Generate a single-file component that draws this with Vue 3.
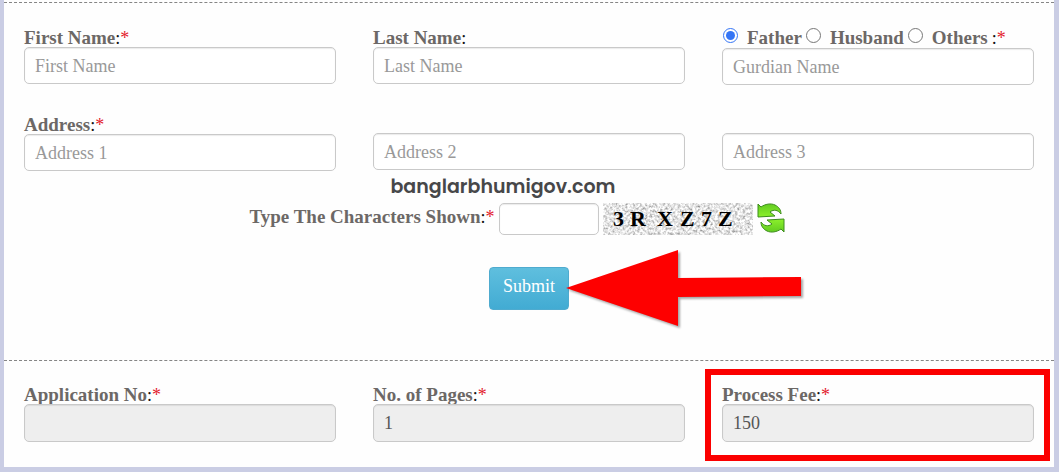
<script setup>
import { ref } from 'vue'

const guardian = ref('Father')
const guardians = ['Father', 'Husband', 'Others']
const captcha = [
  { ch: '3', x: 10 },
  { ch: 'R', x: 27 },
  { ch: 'X', x: 54 },
  { ch: 'Z', x: 77 },
  { ch: '7', x: 98 },
  { ch: 'Z', x: 115 },
]
</script>

<template>
  <form class="page" @submit.prevent>
    <section class="section applicant">
      <div class="row">
        <div class="field">
          <label class="caption" for="first"><b>First Name</b>:<i>*</i></label>
          <input id="first" class="box" type="text" placeholder="First Name" />
        </div>
        <div class="field">
          <label class="caption" for="last"><b>Last Name</b>:</label>
          <input id="last" class="box" type="text" placeholder="Last Name" />
        </div>
        <div class="field">
          <div class="caption choices">
            <label v-for="g in guardians" :key="g" class="choice">
              <input v-model="guardian" type="radio" name="guardian" :value="g" />
              <b>{{ g }}</b>
            </label>
            <span class="mark">:<i>*</i></span>
          </div>
          <input class="box" type="text" placeholder="Gurdian Name" aria-label="Gurdian Name" />
        </div>
      </div>

      <div class="row second">
        <div class="field">
          <label class="caption" for="addr1"><b>Address</b>:<i>*</i></label>
          <input id="addr1" class="box" type="text" placeholder="Address 1" />
        </div>
        <div class="field bare">
          <input class="box" type="text" placeholder="Address 2" aria-label="Address 2" />
        </div>
        <div class="field bare">
          <input class="box" type="text" placeholder="Address 3" aria-label="Address 3" />
        </div>
      </div>

      <div class="site">banglarbhumigov.com</div>

      <div class="captcha">
        <label class="caption" for="code"><b>Type The Characters Shown</b>:<i>*</i></label>
        <input id="code" class="box code" type="text" />
        <svg class="noise" width="150" height="32" viewBox="0 0 150 32" role="img" aria-label="Captcha">
          <filter id="grain" x="0" y="0" width="100%" height="100%">
            <feTurbulence type="fractalNoise" baseFrequency="0.4" numOctaves="2" seed="7" />
            <feColorMatrix
              type="matrix"
              values="1.4 0 0 0 0.08  1.4 0 0 0 0.08  1.4 0 0 0 0.08  0 0 0 0 1"
            />
          </filter>
          <rect width="150" height="32" filter="url(#grain)" />
          <text v-for="(c, n) in captcha" :key="n" :x="c.x" y="23">{{ c.ch }}</text>
        </svg>
        <button type="button" class="refresh" aria-label="Refresh">
          <svg width="28" height="30" viewBox="0 0 28 30">
            <defs>
              <linearGradient id="leaf" x1="0" y1="0" x2="0" y2="1">
                <stop offset="0" stop-color="#62cc20" />
                <stop offset="1" stop-color="#8cf02c" />
              </linearGradient>
            </defs>
            <g fill="url(#leaf)" stroke="#3c8c1c" stroke-width="1" stroke-linejoin="round">
              <path d="M1 1 L4 4 C8 1 14 0 18 2 C22 4 24 7 24 11 C21 7 17 6 13 9 L18 13 L1 14 Z" />
              <path
                transform="rotate(180 14 15)"
                d="M1 1 L4 4 C8 1 14 0 18 2 C22 4 24 7 24 11 C21 7 17 6 13 9 L18 13 L1 14 Z"
              />
            </g>
          </svg>
        </button>
      </div>

      <div class="actions">
        <div class="anchor">
          <button type="submit" class="submit">Submit</button>
          <svg class="arrow" width="242" height="84" viewBox="0 0 242 84" aria-hidden="true">
            <path d="M0 38 L112 0 L112 28 L235 27 L235 46 L112 47 L112 76 Z" fill="#fe0000" />
          </svg>
        </div>
      </div>
    </section>

    <section class="section fees">
      <div class="row">
        <div class="field">
          <label class="caption" for="app"><b>Application No</b>:<i>*</i></label>
          <input id="app" class="box" type="text" readonly />
        </div>
        <div class="field">
          <label class="caption" for="pages"><b>No. of Pages</b>:<i>*</i></label>
          <input id="pages" class="box" type="text" value="1" readonly />
        </div>
        <div class="field marked">
          <label class="caption" for="fee"><b>Process Fee</b>:<i>*</i></label>
          <input id="fee" class="box" type="text" value="150" readonly />
        </div>
      </div>
    </section>
  </form>
</template>

<style>
body {
  margin: 0;
  background: #cacde4;
}
</style>

<style scoped>
.page {
  box-sizing: border-box;
  border: solid #cacde4;
  border-width: 0 5px 5px 4px;
  padding-top: 2px;
  background: #fefefe;
  font-family: 'Liberation Serif', 'Times New Roman', serif;
  font-size: 18px;
  color: #111;
}
.section {
  border-top: 1px dashed #858585;
}
.applicant {
  padding: 24px 0 50px;
}
.fees {
  padding: 23px 0 25px;
}
.row {
  display: grid;
  grid-template-columns: repeat(3, minmax(0, 1fr));
  gap: 37px;
  padding: 0 20px;
}
.second {
  margin-top: 29px;
}
.field {
  position: relative;
  display: flex;
  flex-direction: column;
}
.bare {
  padding-top: 19px;
}
.caption {
  display: block;
  height: 20px;
  line-height: 22px;
  white-space: nowrap;
}
.caption b {
  font-size: 19px;
  color: #6c6866;
}
.caption i {
  font-style: normal;
  color: #e3202c;
}
.box {
  box-sizing: border-box;
  width: 100%;
  height: 37px;
  border: 1px solid #c9c9c9;
  border-radius: 5px;
  padding: 1px 10px 0;
  background: #fff;
  box-shadow: inset 0 1px 1px rgba(0, 0, 0, 0.08);
  font: inherit;
  color: #555;
}
.box::placeholder {
  color: #999;
  opacity: 1;
}
.box[readonly] {
  height: 38px;
  background: #eee;
}
.choices {
  display: flex;
  height: 21px;
}
.choice {
  display: flex;
  margin-right: 3px;
}
.choice input {
  width: 15px;
  height: 15px;
  margin: 1px 9px 0 1px;
  accent-color: #3575f5;
}
.mark {
  margin-left: 1px;
}
.site {
  height: 32px;
  padding-right: 52px;
  text-align: center;
  font: 600 19px/31px Poppins, Montserrat, Inter, sans-serif;
  color: #474749;
}
.captcha {
  display: flex;
  justify-content: center;
  gap: 4px;
  padding-right: 24px;
}
.captcha .caption {
  line-height: 28px;
}
.code {
  width: 100px;
  height: 32px;
}
.noise text {
  font: bold 22px 'Liberation Serif', serif;
  fill: #000;
}
.refresh {
  height: 30px;
  border: 0;
  padding: 0;
  background: none;
}
.refresh svg {
  display: block;
}
.actions {
  display: flex;
  justify-content: center;
  margin-top: 32px;
}
.anchor {
  position: relative;
}
.submit {
  display: block;
  height: 43px;
  border: 1px solid #4fabcf;
  border-radius: 4px;
  padding: 0 13px 4px;
  background: linear-gradient(#5fbfde, #42abd3);
  font: inherit;
  color: #fff;
}
.arrow {
  position: absolute;
  left: 77px;
  top: -17px;
  filter: drop-shadow(2px 2px 1px rgba(0, 0, 0, 0.35));
}
.marked::after {
  content: '';
  position: absolute;
  inset: -15px -16px -19px -17px;
  border: 6px solid #fb0000;
  pointer-events: none;
}
</style>
